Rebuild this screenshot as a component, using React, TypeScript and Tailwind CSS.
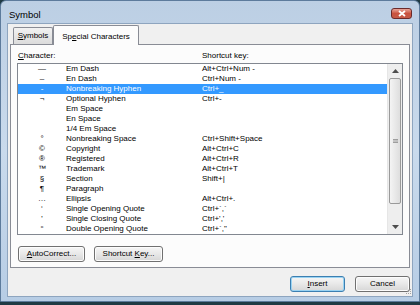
import React from "react";

type Row = { sym: string; name: string; key: string };

const rows: Row[] = [
  { sym: "—", name: "Em Dash", key: "Alt+Ctrl+Num -" },
  { sym: "–", name: "En Dash", key: "Ctrl+Num -" },
  { sym: "-", name: "Nonbreaking Hyphen", key: "Ctrl+_" },
  { sym: "¬", name: "Optional Hyphen", key: "Ctrl+-" },
  { sym: "", name: "Em Space", key: "" },
  { sym: "", name: "En Space", key: "" },
  { sym: "", name: "1/4 Em Space", key: "" },
  { sym: "°", name: "Nonbreaking Space", key: "Ctrl+Shift+Space" },
  { sym: "©", name: "Copyright", key: "Alt+Ctrl+C" },
  { sym: "®", name: "Registered", key: "Alt+Ctrl+R" },
  { sym: "™", name: "Trademark", key: "Alt+Ctrl+T" },
  { sym: "§", name: "Section", key: "Shift+|" },
  { sym: "¶", name: "Paragraph", key: "" },
  { sym: "…", name: "Ellipsis", key: "Alt+Ctrl+." },
  { sym: "‘", name: "Single Opening Quote", key: "Ctrl+`,`" },
  { sym: "’", name: "Single Closing Quote", key: "Ctrl+','" },
  { sym: "“", name: "Double Opening Quote", key: "Ctrl+`,\"" },
];

const font = { fontFamily: '"Liberation Sans", Arial, sans-serif' };

function Button({ children, primary }: { children: React.ReactNode; primary?: boolean }) {
  return (
    <div
      className={
        "flex items-center justify-center rounded-[3px] border bg-gradient-to-b from-[#f6f6f6] via-[#e8e8e8] to-[#d6d6d6] text-[8px] text-black h-[16px] " +
        (primary ? "border-[#3c7fb1] shadow-[inset_0_0_0_1px_#9ad3f2]" : "border-[#707070] shadow-[inset_0_0_0_1px_#fcfcfc]")
      }
    >
      {children}
    </div>
  );
}

function Arrow({ up }: { up?: boolean }) {
  return (
    <div className="h-[14px] shrink-0 flex items-center justify-center">
      <svg width="7" height="4" viewBox="0 0 7 4">
        {up ? <path d="M0 4 L3.5 0 L7 4 Z" fill="#4d4d4d" /> : <path d="M0 0 L3.5 4 L7 0 Z" fill="#4d4d4d" />}
      </svg>
    </div>
  );
}

export default function App() {
  return (
    <div className="w-[420px] h-[305px] bg-[#1f3a44] overflow-hidden" style={font}>
      <div className="h-[302px] rounded-t-[6px] border border-[#5d7b9c] bg-gradient-to-b from-[#bccfe4] via-[#c9daec] to-[#b7cde5] flex flex-col px-[6px] pb-[4px]">
        {/* title bar */}
        <div className="h-[22px] shrink-0 flex items-start justify-between">
          <span className="text-[9.5px] text-black pl-[2px] pt-[9px] leading-none">Symbol</span>
          <div className="mt-[7px] mr-[1px] w-[21px] h-[11px] rounded-[3px] border border-[#6b2a2a] bg-gradient-to-b from-[#e8a59a] via-[#c9523f] to-[#c45a48] flex items-center justify-center">
            <svg width="8" height="7" viewBox="0 0 8 7">
              <path d="M1 1 L7 6 M7 1 L1 6" stroke="#fff" strokeWidth="1.8" />
            </svg>
          </div>
        </div>
        {/* client */}
        <div className="relative flex-1 min-h-0 bg-[#f0f0f0] border border-[#8ea5bf] flex flex-col px-[2px]">
          <div className="h-[20px] shrink-0 flex items-end pl-[3px] relative z-10">
            <div className="h-[17px] w-[40px] border border-b-0 border-[#898c95] rounded-t-[2px] bg-gradient-to-b from-[#f2f2f2] to-[#dbdbdb] flex items-center justify-center text-[8px]">
              <span><u>S</u>ymbols</span>
            </div>
            <div className="h-[20px] w-[86px] -mb-px border border-b-0 border-[#898c95] rounded-t-[2px] bg-[#fcfcfc] flex items-center justify-center text-[8px] pt-[2px]">
              <span>Sp<u>e</u>cial Characters</span>
            </div>
          </div>
          <div className="shrink-0 border border-[#898c95] bg-[#fcfcfc] px-[6px] pb-[5px] flex flex-col">
            <div className="h-[18px] flex items-end pb-[3px] text-[8px] leading-none">
              <span className="w-[185px] pl-px"><u>C</u>haracter:</span>
              <span>Shortcut key:</span>
            </div>
            <div className="h-[172px] border border-[#828790] bg-white flex">
              <div className="flex-1 flex flex-col">
                {rows.map((r, i) => (
                  <div
                    key={i}
                    className={
                      "h-[10px] shrink-0 flex items-center text-[8px] leading-none " +
                      (i === 2 ? "bg-[#3399ff] text-white" : "text-black")
                    }
                  >
                    <span className="w-[48px] text-center">{r.sym}</span>
                    <span className="w-[136px]">{r.name}</span>
                    <span>{r.key}</span>
                  </div>
                ))}
              </div>
              <div className="w-[15px] bg-[#eeeeee] border-l border-[#e6e6e6] flex flex-col">
                <Arrow up />
                <div className="h-[126px] shrink-0 mx-[1px] rounded-[2px] border border-[#9a9a9a] bg-gradient-to-r from-[#f4f4f4] to-[#dedede] flex items-center justify-center">
                  <svg width="5" height="4" viewBox="0 0 5 4">
                    <path d="M0 0.5 H5 M0 2 H5 M0 3.5 H5" stroke="#8a8a8a" strokeWidth="0.8" />
                  </svg>
                </div>
                <div className="flex-1" />
                <Arrow />
              </div>
            </div>
            <div className="flex gap-[9px] mt-[11px] pl-px">
              <div className="w-[67px]">
                <Button><span><u>A</u>utoCorrect...</span></Button>
              </div>
              <div className="w-[69px]">
                <Button><span>Shortcut <u>K</u>ey...</span></Button>
              </div>
            </div>
          </div>
          <div className="shrink-0 flex justify-end gap-[10px] mt-[8px]">
            <div className="w-[55px]">
              <Button primary><span><u>I</u>nsert</span></Button>
            </div>
            <div className="w-[55px]">
              <Button>Cancel</Button>
            </div>
          </div>
          <svg className="absolute right-0 bottom-0" width="8" height="8" viewBox="0 0 8 8">
            <g fill="#a0a0a0">
              <rect x="6" y="1" width="1" height="1" />
              <rect x="4" y="3" width="1" height="1" />
              <rect x="6" y="3" width="1" height="1" />
              <rect x="2" y="5" width="1" height="1" />
              <rect x="4" y="5" width="1" height="1" />
              <rect x="6" y="5" width="1" height="1" />
            </g>
          </svg>
        </div>
      </div>
    </div>
  );
}
